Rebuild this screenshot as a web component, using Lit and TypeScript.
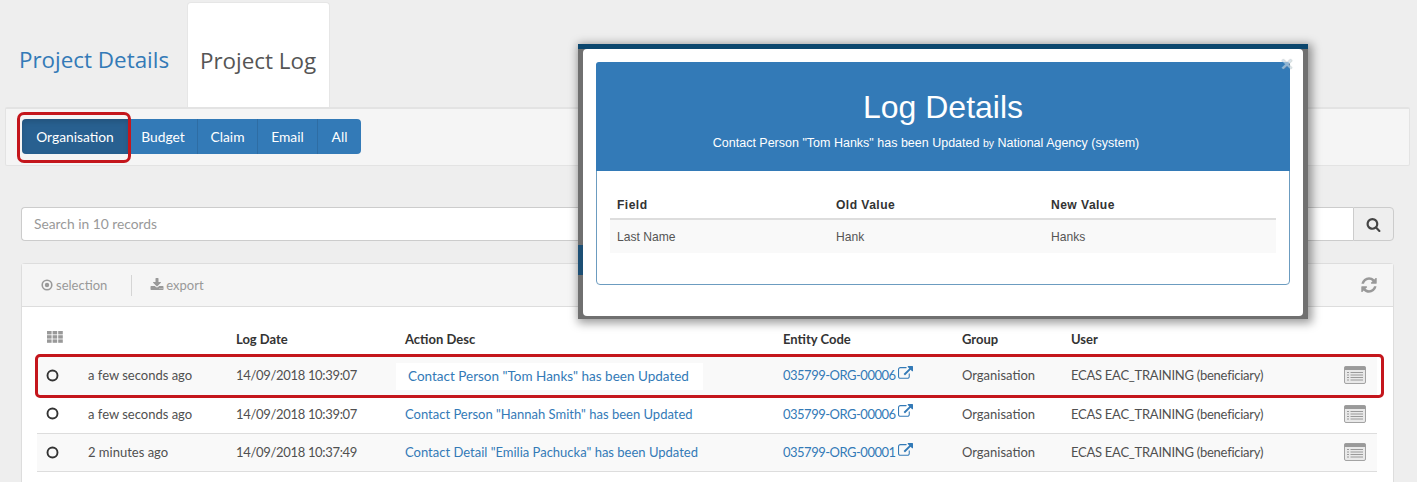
import { LitElement, html, css, svg } from "lit";
import { customElement } from "lit/decorators.js";

const fa = (d: string, cls: string) => html`<svg class=${cls} viewBox="0 0 1792 1792" fill="currentColor"><path d=${d}></path></svg>`;
const SEARCH = "M1216 832q0-185-131.500-316.500t-316.500-131.500-316.500 131.500-131.500 316.500 131.500 316.500 316.500 131.500 316.500-131.500 131.500-316.500zm512 832q0 52-38 90t-90 38q-54 0-90-38l-343-342q-179 124-399 124-143 0-273.500-55.500t-225-150-150-225-55.500-273.500 55.500-273.500 150-225 225-150 273.500-55.500 273.500 55.500 225 150 150 225 55.500 273.500q0 220-124 399l343 343q37 37 37 90z";
const REFRESH = "M1639 1056q0 5-1 7-64 268-268 434.500t-478 166.500q-146 0-282.500-55t-243.500-157l-129 129q-19 19-45 19t-45-19-19-45v-448q0-26 19-45t45-19h448q26 0 45 19t19 45-19 45l-137 137q71 66 161 102t187 36q134 0 250-65t186-179q11-17 53-117 8-23 30-23h192q13 0 22.500 9.500t9.500 22.500zm25-800v448q0 26-19 45t-45 19h-448q-26 0-45-19t-19-45 19-45l138-138q-148-137-349-137-134 0-250 65t-186 179q-11 17-53 117-8 23-30 23h-199q-13 0-22.500-9.500t-9.500-22.500v-7q65-268 270-434.500t480-166.500q146 0 284 55.500t245 156.500l130-129q19-19 45-19t45 19 19 45z";
const EXT = "M1408 928v320q0 119-84.500 203.500t-203.500 84.500h-832q-119 0-203.500-84.500t-84.500-203.500v-832q0-119 84.500-203.500t203.500-84.500h704q14 0 23 9t9 23v64q0 14-9 23t-23 9h-704q-66 0-113 47t-47 113v832q0 66 47 113t113 47h832q66 0 113-47t47-113v-320q0-14 9-23t23-9h64q14 0 23 9t9 23zm384-864v512q0 26-19 45t-45 19-45-19l-176-176-652 652q-10 10-23 10t-23-10l-114-114q-10-10-10-23t10-23l652-652-176-176q-19-19-19-45t19-45 45-19h512q26 0 45 19t19 45z";
const DOWNLOAD = "M1344 1344q0-26-19-45t-45-19-45 19-19 45 19 45 45 19 45-19 19-45zm256 0q0-26-19-45t-45-19-45 19-19 45 19 45 45 19 45-19 19-45zm128-224v320q0 40-28 68t-68 28h-1472q-40 0-68-28t-28-68v-320q0-40 28-68t68-28h465l135 136q58 56 136 56t136-56l136-136h464q40 0 68 28t28 68zm-325-569q17 41-14 70l-448 448q-18 19-45 19t-45-19l-448-448q-31-29-14-70 17-39 59-39h256v-448q0-26 19-45t45-19h256q26 0 45 19t19 45v448h256q42 0 59 39z";

const dotCircle = html`<svg class="ic-sel" viewBox="0 0 12 12"><circle cx="6" cy="6" r="4.8" fill="none" stroke="currentColor" stroke-width="1.6"></circle><circle cx="6" cy="6" r="2.2" fill="currentColor"></circle></svg>`;
const radio = html`<svg class="radio" viewBox="0 0 13 13"><circle cx="6.5" cy="6.5" r="5" fill="none" stroke="#333" stroke-width="1.9"></circle></svg>`;
const grid = html`<svg class="grid" viewBox="0 0 16 12" fill="#999">
  ${[0, 4.2, 8.4].map((y) => [0, 5.6, 11.2].map((x) => svg`<rect x=${x} y=${y} width="4.6" height="3.4"></rect>`))}
</svg>`;
const logIcon = html`<svg class="log" viewBox="0 0 22 18">
  <rect x="0.5" y="0.5" width="21" height="17" rx="1.5" fill="#e9e9e9" stroke="#a3a3a3"></rect>
  <rect x="0.5" y="0.5" width="21" height="3.5" fill="#9a9a9a"></rect>
  ${[6.5, 9, 11.5, 14].map((y) => svg`<path d="M3 ${y}h2M6.500 ${y}h12.500" stroke="#9a9a9a" stroke-width="1"></path>`)}
</svg>`;

const rows = [
  ["a few seconds ago", "14/09/2018 10:39:07", 'Contact Person "Tom Hanks" has been Updated', "035799-ORG-00006"],
  ["a few seconds ago", "14/09/2018 10:39:07", 'Contact Person "Hannah Smith" has been Updated', "035799-ORG-00006"],
  ["2 minutes ago", "14/09/2018 10:37:49", 'Contact Detail "Emilia Pachucka" has been Updated', "035799-ORG-00001"],
];

@customElement("app-root")
export class AppRoot extends LitElement {
  static styles = css`
    :host { display: block; position: relative; width: 1417px; height: 482px; overflow: hidden; background: #eee; font-family: Lato, "Open Sans", sans-serif; color: #444; }
    * { box-sizing: border-box; }
    .tabs { display: flex; height: 107px; padding-left: 5px; padding-top: 2px; }
    .tab { width: 168px; padding: 43px 0 0 14px; font-family: "Open Sans", sans-serif; font-size: 22.400px; line-height: 30px; color: #337ab7; white-space: nowrap; }
    .tab.active { width: 143px; margin-left: 14px; padding-left: 12px; background: #fff; color: #555; border-radius: 4px 4px 0 0; border: 1px solid #e6e6e6; border-bottom: 0; }
    .bar { height: 59px; margin: 0 7px 0 5px; padding: 10px 16px; background: #f5f5f5; border: 1px solid #e3e3e3; border-top: 2px solid #e3e3e3; border-radius: 2px; }
    .group { display: flex; height: 35px; width: 339px; }
    .group button { all: unset; box-sizing: border-box; display: flex; align-items: center; justify-content: center; background: #337ab7; color: #fff; font: 13.800px Lato, "Open Sans", sans-serif; border-right: 1px solid #2e6da4; }
    .group button:first-child { background: #286090; border-radius: 4px 0 0 4px; box-shadow: inset 0 3px 5px rgba(0,0,0,.125); }
    .group button:last-child { border-radius: 0 4px 4px 0; border-right: 0; }
    .search { display: flex; height: 34px; margin: 41px 23px 0 21px; }
    .input { flex: 1; background: #fff; border: 1px solid #ccc; border-right: 0; border-radius: 4px 0 0 4px; padding-left: 12px; line-height: 32px; font-size: 13.800px; color: #999; }
    .sbtn { width: 41px; background: #eee; border: 1px solid #ccc; border-radius: 0 4px 4px 0; display: flex; align-items: center; justify-content: center; color: #444; }
    .ic-search { width: 15px; height: 15px; }
    .panel { margin: 22px 23px 0 21px; background: #fff; border: 1px solid #ddd; border-bottom: 0; border-radius: 4px 4px 0 0; height: 231px; }
    .phead { display: flex; align-items: center; height: 43px; background: #f5f5f5; border-bottom: 1px solid #ddd; padding: 0 15px 0 19px; color: #999; font-size: 13px; }
    .ph-item { display: flex; align-items: center; gap: 3px; }
    .ph-item.ex { gap: 2px; }
    .ic-sel { width: 12px; height: 12px; }
    .ic-dl { width: 14px; height: 14px; }
    .sep { width: 1px; height: 21px; background: #d5d5d5; margin: 0 18px 0 24px; }
    .ic-ref { width: 18px; height: 18px; margin-left: auto; color: #999; }
    table { border-collapse: collapse; table-layout: fixed; width: 1340px; margin: 0 0 0 15px; font-size: 13px; }
    th { height: 50px; padding: 14px 8px 0; text-align: left; font-weight: 700; color: #333; line-height: 16px; font-size: 13px; }
    td { height: 38px; padding: 0 8px; color: #505050; white-space: nowrap; border-bottom: 1px solid #ddd; }
    tbody tr:first-child td { border-bottom: 0; padding-bottom: 2px; }
    tbody tr:first-child td.acell { padding-bottom: 0; }
    tbody tr:nth-child(odd) { background: #f9f9f9; }
    .radio { display: block; width: 13px; height: 13px; margin-left: 1px; }
    .grid { display: block; width: 16px; height: 12px; margin: -4px 0 0 2px; }
    .date { letter-spacing: -.32px; }
    .user { letter-spacing: -.26px; }
    .act { color: #337ab7; }
    .act.hi { display: inline-block; background: #fff; margin-left: -9px; padding: 0 14px 0 12px; line-height: 27px; font-size: 13.500px; }
    .code { color: #337ab7; display: flex; align-items: center; gap: 2px; letter-spacing: -.5px; }
    .ic-ext { width: 15px; height: 15px; margin-top: -4px; }
    .log { display: block; width: 22px; height: 18px; margin-left: 0; }
    .mark { position: absolute; border: 3px solid #c4161c; border-radius: 5px; pointer-events: none; }
    .m1 { left: 17px; top: 112px; width: 114px; height: 51px; border-radius: 7px; }
    .m2 { left: 35px; top: 354px; width: 1349px; height: 44px; }
    .frame { position: absolute; left: 578px; top: 44px; width: 730px; height: 275px; background: linear-gradient(#0b466d 0 5px, #707070 5px); box-shadow: 2px 2px 9px 2px rgba(0,0,0,.4); padding: 5px 5px 3px; }
    .strip { position: absolute; left: 0; top: 201px; width: 5px; height: 30px; background: #1d4f74; }
    .modal { position: relative; height: 100%; background: #fff; border-radius: 4px; padding: 13px; font-family: "Liberation Sans", Arial, sans-serif; }
    .close { position: absolute; right: 10px; top: 4px; font-size: 21px; line-height: 22px; font-weight: 700; opacity: .65; text-shadow: 0 0 1px #888; color: #c5d5e2; }
    .box { height: 223px; border: 1px solid #6c9cc0; border-radius: 4px; }
    .hero { height: 109px; background: #337ab7; color: #fff; text-align: center; margin: -1px -1px 0; border-radius: 3px 3px 0 0; padding-top: 27px; }
    .hero h2 { margin: 0; font-weight: 400; font-size: 32px; line-height: 36px; }
    .hero p { margin: 10px 0 0; padding-right: 34px; font-size: 12.500px; line-height: 16px; }
    .hero small { font-size: 10.500px; }
    .inner { padding: 26px 13px 0; }
    .mt { display: grid; grid-template-columns: 219px 215px 1fr; font-size: 12.100px; color: #555; }
    .mt > div { padding: 0 7px; }
    .mt .h { font-weight: 700; color: #333; height: 23px; line-height: 16px; border-bottom: 2px solid #ddd; letter-spacing: .45px; }
    .mt .c { height: 33px; line-height: 35px; background: #f9f9f9; }
  `;

  render() {
    return html`
      <div class="tabs"><div class="tab">Project Details</div><div class="tab active">Project Log</div></div>
      <div class="bar">
        <div class="group">
          ${[["Organisation", 107], ["Budget", 69], ["Claim", 60], ["Email", 60], ["All", 43]].map(([t, w]) => html`<button style="width:${w}px">${t}</button>`)}
        </div>
      </div>
      <div class="search"><div class="input">Search in 10 records</div><div class="sbtn">${fa(SEARCH, "ic-search")}</div></div>
      <div class="panel">
        <div class="phead">
          <span class="ph-item">${dotCircle}selection</span><span class="sep"></span>
          <span class="ph-item ex">${fa(DOWNLOAD, "ic-dl")}export</span>
          ${fa(REFRESH, "ic-ref")}
        </div>
        <table>
          <colgroup><col style="width:43px"/><col style="width:148px"/><col style="width:169px"/><col style="width:378px"/><col style="width:179px"/><col style="width:109px"/><col style="width:273px"/><col style="width:41px"/></colgroup>
          <thead><tr><th>${grid}</th><th></th><th>Log Date</th><th>Action Desc</th><th>Entity Code</th><th>Group</th><th>User</th><th></th></tr></thead>
          <tbody>
            ${rows.map((r, i) => html`<tr>
              <td>${radio}</td><td>${r[0]}</td><td class="date">${r[1]}</td>
              <td class="acell"><span class="act ${i === 0 ? "hi" : ""}">${r[2]}</span></td>
              <td><span class="code">${r[3]}${fa(EXT, "ic-ext")}</span></td>
              <td>Organisation</td><td class="user">ECAS EAC_TRAINING (beneficiary)</td><td>${logIcon}</td>
            </tr>`)}
          </tbody>
        </table>
      </div>
      <div class="mark m1"></div>
      <div class="mark m2"></div>
      <div class="frame">
        <div class="strip"></div>
        <div class="modal">
          <span class="close">×</span>
          <div class="box">
            <div class="hero">
              <h2>Log Details</h2>
              <p>Contact Person "Tom Hanks" has been Updated <small>by</small> National Agency (system)</p>
            </div>
            <div class="inner">
              <div class="mt">
                <div class="h">Field</div><div class="h">Old Value</div><div class="h">New Value</div>
                <div class="c">Last Name</div><div class="c">Hank</div><div class="c">Hanks</div>
              </div>
            </div>
          </div>
        </div>
      </div>
    `;
  }
}
